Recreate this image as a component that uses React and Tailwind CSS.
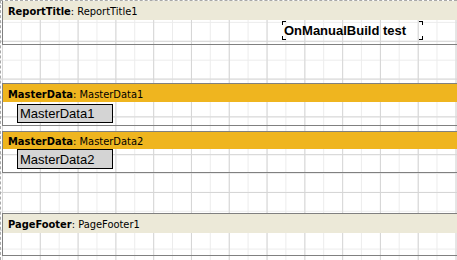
const bandFont = "font-['DejaVu_Sans_Condensed','DejaVu_Sans',sans-serif] text-[11px] leading-none";

const Band = ({ kind, name, headerClass, headerH, bodyH, noTop, className = '', children }) => (
  <div
    className={`w-[470px] border-l border-b border-[#808080] ${noTop ? '' : 'border-t'} ${className}`}
  >
    <div className={`${headerH} ${headerClass} flex items-center pl-[5px] pt-[2px] text-black ${bandFont}`}>
      <span className="font-bold">{kind}</span>
      <span>: {name}</span>
    </div>
    <div className={`${bodyH} flex`}>{children}</div>
  </div>
);

const Corner = ({ pos }) => <span className={`absolute w-[4px] h-[4px] border-black ${pos}`} />;

const DataBox = ({ label, className = '' }) => (
  <div
    className={`ml-[14px] w-[96px] bg-[#d4d4d4] border border-black flex items-center pl-[2px] text-[13px] leading-none text-black font-['Liberation_Sans',Arial,sans-serif] ${className}`}
  >
    {label}
  </div>
);

export default function App() {
  return (
    <div className="w-[457px] h-[260px] overflow-hidden bg-white border-t border-l border-dashed border-[#a8a8a8] pl-[1px] bg-[linear-gradient(to_right,#d6d6d6_1px,transparent_1px),linear-gradient(to_bottom,#d6d6d6_1px,transparent_1px),linear-gradient(to_right,#ececec_1px,transparent_1px),linear-gradient(to_bottom,#ececec_1px,transparent_1px)] [background-size:37.8px_37.8px,37.8px_37.8px,18.9px_18.9px,18.9px_18.9px] [background-position:1px_2px]">
      <Band
        kind="ReportTitle"
        name="ReportTitle1"
        headerClass="bg-[#ece9d8]"
        headerH="h-[19px]"
        bodyH="h-[24px]"
        noTop
      >
        <div className="relative ml-[279px] mt-[1px] w-[141px] h-[19px] flex items-center pl-[2px] font-['Liberation_Sans',Arial,sans-serif] font-bold text-[13px] leading-none text-black">
          <Corner pos="left-0 top-0 border-l border-t" />
          <Corner pos="right-0 top-0 border-r border-t" />
          <Corner pos="left-0 bottom-0 border-l border-b" />
          <Corner pos="right-0 bottom-0 border-r border-b" />
          OnManualBuild test
        </div>
      </Band>

      <Band
        kind="MasterData"
        name="MasterData1"
        headerClass="bg-[#efb51f]"
        headerH="h-[18px]"
        bodyH="h-[23px]"
        className="mt-[38px]"
      >
        <DataBox label="MasterData1" className="mt-[2px] h-[19px]" />
      </Band>

      <Band
        kind="MasterData"
        name="MasterData2"
        headerClass="bg-[#efb51f]"
        headerH="h-[17px]"
        bodyH="h-[23px]"
        className="mt-[5px]"
      >
        <DataBox label="MasterData2" className="h-[20px]" />
      </Band>

      <Band
        kind="PageFooter"
        name="PageFooter1"
        headerClass="bg-[#ece9d8]"
        headerH="h-[19px]"
        bodyH="h-[22px]"
        className="mt-[40px]"
      />
    </div>
  );
}
